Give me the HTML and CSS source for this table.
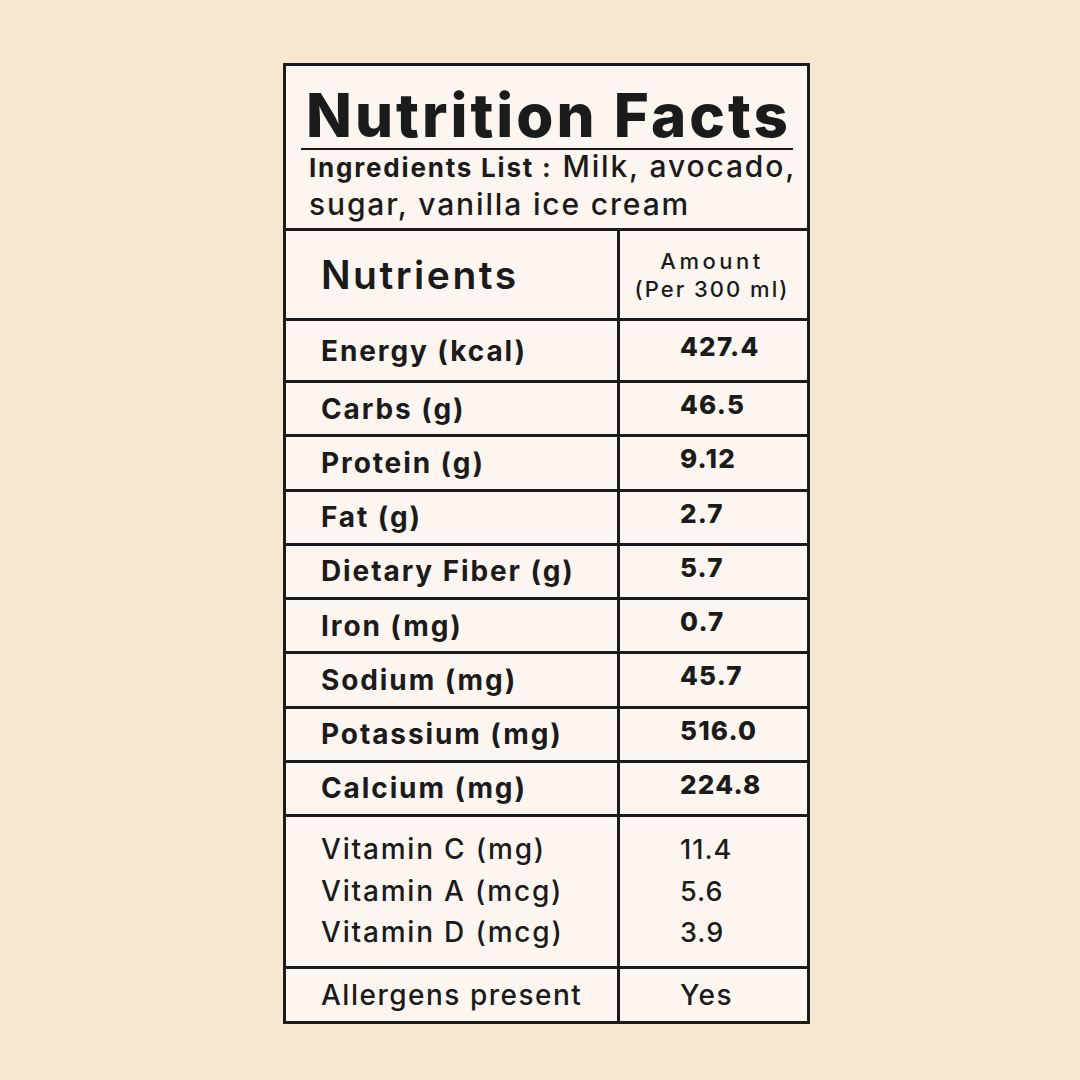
FILE: index.html
```html
<!DOCTYPE html>
<html lang="en">
<head>
<meta charset="utf-8">
<title>Nutrition Facts</title>
<link rel="stylesheet" href="styles.css">
</head>
<body>
<div class="page">
  <div class="label">
    <div class="head">
      <h1 class="title">Nutrition Facts</h1>
      <p class="ingredients"><b>Ingredients List :</b> Milk, avocado,<br>sugar, vanilla ice cream</p>
    </div>
    <div class="row row-head">
      <div class="cell name"><span class="nutrients">Nutrients</span></div>
      <div class="cell val amount"><span class="amount-top">Amount</span><span>(Per 300 ml)</span></div>
    </div>
    <div class="row row-energy">
      <div class="cell name bold">Energy (kcal)</div>
      <div class="cell val bold">427.4</div>
    </div>
    <div class="row row-std">
      <div class="cell name bold">Carbs (g)</div>
      <div class="cell val bold">46.5</div>
    </div>
    <div class="row row-std">
      <div class="cell name bold">Protein (g)</div>
      <div class="cell val bold">9.12</div>
    </div>
    <div class="row row-std">
      <div class="cell name bold">Fat (g)</div>
      <div class="cell val bold">2.7</div>
    </div>
    <div class="row row-std">
      <div class="cell name bold">Dietary Fiber (g)</div>
      <div class="cell val bold">5.7</div>
    </div>
    <div class="row row-std">
      <div class="cell name bold">Iron (mg)</div>
      <div class="cell val bold">0.7</div>
    </div>
    <div class="row row-std">
      <div class="cell name bold">Sodium (mg)</div>
      <div class="cell val bold">45.7</div>
    </div>
    <div class="row row-std">
      <div class="cell name bold">Potassium (mg)</div>
      <div class="cell val bold">516.0</div>
    </div>
    <div class="row row-std">
      <div class="cell name bold">Calcium (mg)</div>
      <div class="cell val bold">224.8</div>
    </div>
    <div class="row row-vit">
      <div class="cell name list">
        <span>Vitamin C (mg)</span>
        <span>Vitamin A (mcg)</span>
        <span>Vitamin D (mcg)</span>
      </div>
      <div class="cell val list nums">
        <span>11.4</span>
        <span>5.6</span>
        <span>3.9</span>
      </div>
    </div>
    <div class="row row-allergen">
      <div class="cell name">Allergens present</div>
      <div class="cell val">Yes</div>
    </div>
  </div>
</div>
</body>
</html>
```

FILE: styles.css
```css
html, body {
  margin: 0;
  padding: 0;
}

body {
  background: #f7e6d0;
  font-family: "Inter", "Open Sans", sans-serif;
  color: #1b1b1b;
  width: 1080px;
  height: 1080px;
  overflow: hidden;
}

.page {
  padding: 63px 0 0 283px;
}

.label {
  box-sizing: border-box;
  width: 527px;
  background: #fdf6f0;
  border: 3px solid #1b1b1b;
}

.head {
  height: 162px;
  box-sizing: border-box;
  padding: 16px 14px 0 15px;
}

.title {
  margin: 0;
  font-size: 60px;
  font-weight: 800;
  line-height: 66px;
  letter-spacing: 3px;
  padding-left: 5px;
  border-bottom: 2px solid #1b1b1b;
  white-space: nowrap;
}

.ingredients {
  margin: -2px 0 0 8px;
  font-size: 30px;
  line-height: 37px;
  font-weight: 500;
  letter-spacing: 1.85px;
  white-space: nowrap;
}

.ingredients b {
  font-size: 26px;
  font-weight: 700;
  letter-spacing: 1.8px;
}

.row {
  display: grid;
  grid-template-columns: 331px 187px;
  border-top: 3px solid #1b1b1b;
}

.cell {
  display: flex;
  align-items: center;
  white-space: nowrap;
}

.name {
  padding-left: 35px;
}

.val {
  border-left: 3px solid #1b1b1b;
  padding-left: 60px;
}

.bold {
  font-size: 28px;
  font-weight: 700;
  letter-spacing: 1.9px;
}

.val.bold {
  font-size: 26px;
  font-weight: 800;
  letter-spacing: 1.2px;
  box-sizing: border-box;
  padding-bottom: 8px;
}

.row-head { height: 87px; }
.row-energy { height: 59px; }
.row-std { height: 51.25px; }
.row-vit { height: 149px; }
.row-allergen { height: 52px; }

.nutrients {
  font-size: 39px;
  font-weight: 600;
  letter-spacing: 2.5px;
}

.amount {
  padding-left: 0;
  flex-direction: column;
  justify-content: center;
  text-align: center;
  font-size: 22px;
  line-height: 28px;
  font-weight: 500;
  letter-spacing: 2px;
}

.amount-top {
  letter-spacing: 3.5px;
}

.list {
  flex-direction: column;
  align-items: flex-start;
  justify-content: center;
  font-size: 28px;
  line-height: 41.5px;
  font-weight: 500;
  letter-spacing: 1.8px;
}

.list.nums {
  font-size: 27px;
  letter-spacing: 1px;
}

.row-allergen .cell {
  font-size: 28px;
  font-weight: 500;
  letter-spacing: 1.5px;
}
```
